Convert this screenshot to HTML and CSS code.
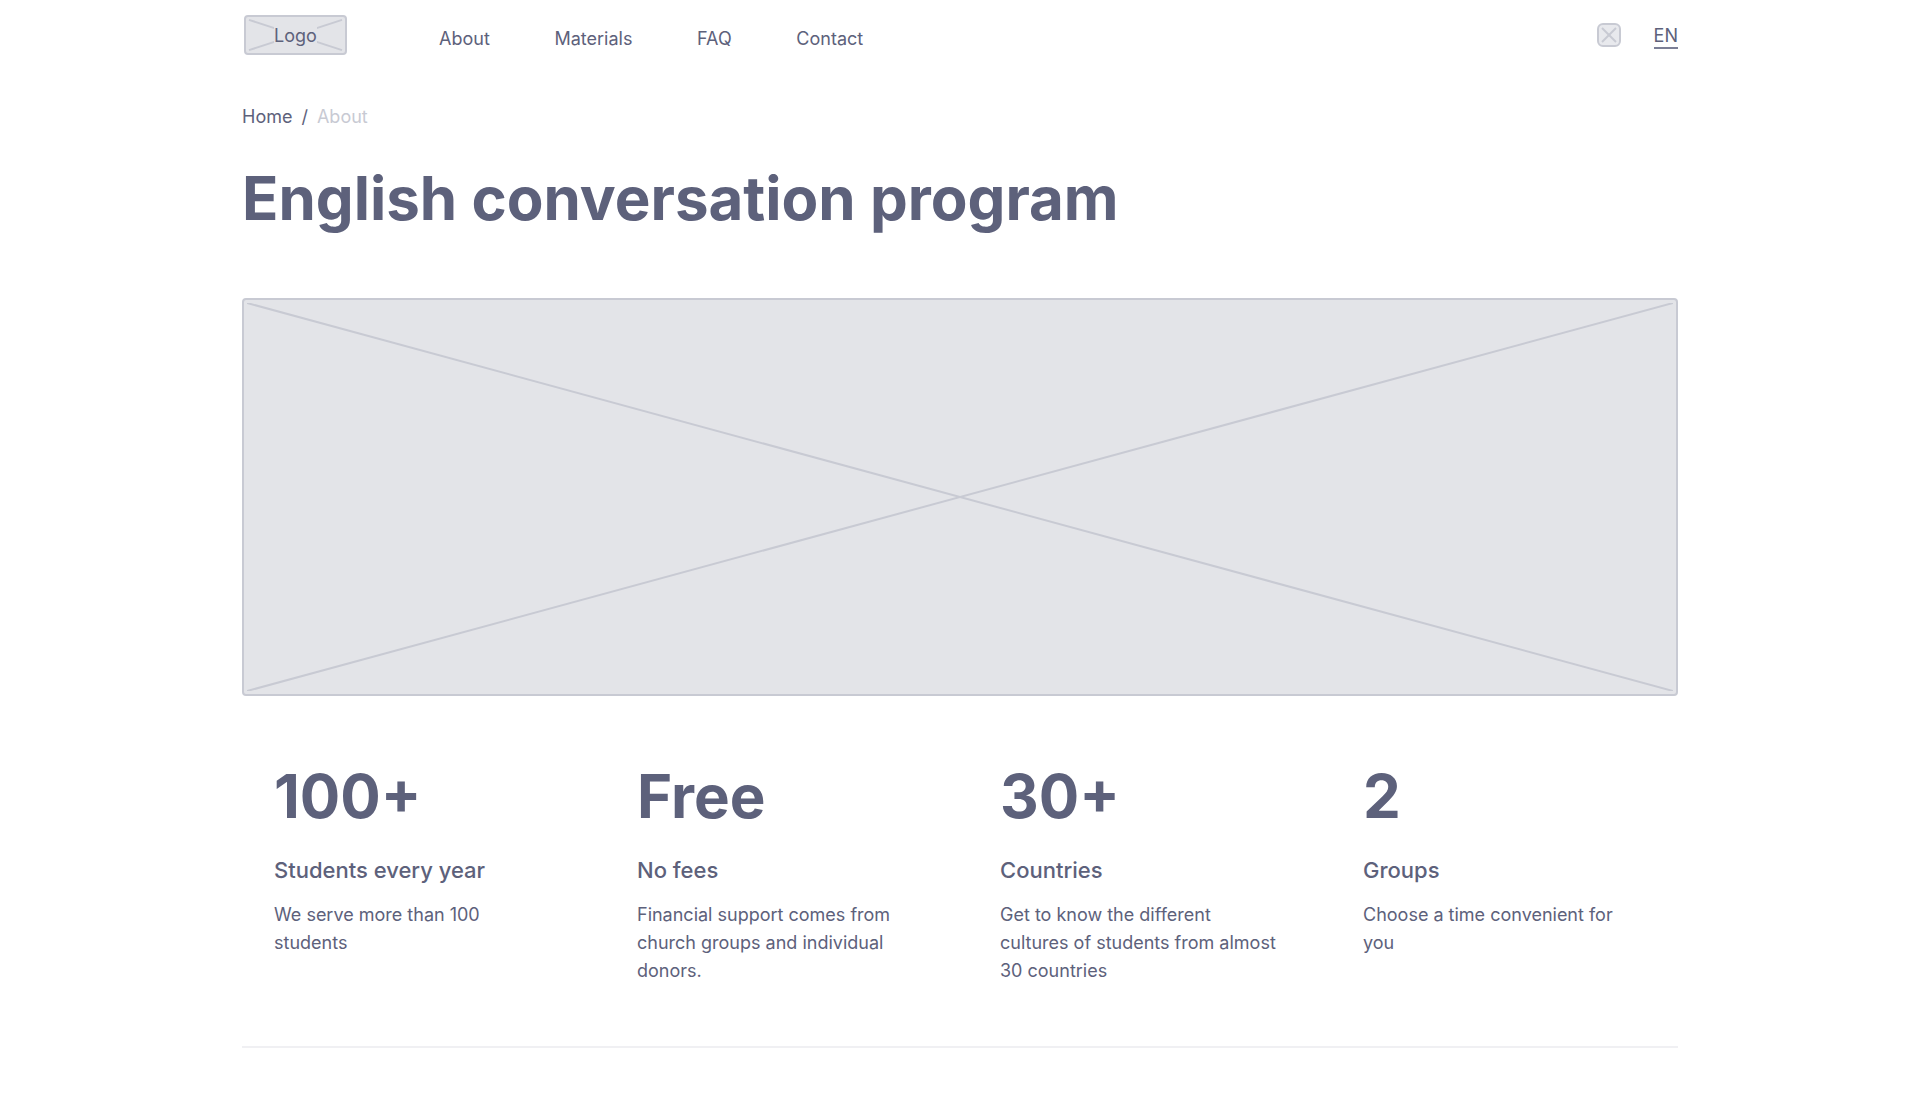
FILE: index.html
```html
<!DOCTYPE html>
<html lang="en">
<head>
  <meta charset="UTF-8" />
  <meta name="viewport" content="width=device-width, initial-scale=1" />
  <title>English conversation program</title>
  <link rel="stylesheet" href="styles.css">
</head>
<body>
  <div class="container">
    <header class="topbar">
      <a class="logo" href="#">
        <svg class="cross" viewBox="0 0 100 100" preserveAspectRatio="none">
          <line x1="3" y1="8" x2="97" y2="92" vector-effect="non-scaling-stroke" />
          <line x1="97" y1="8" x2="3" y2="92" vector-effect="non-scaling-stroke" />
        </svg>
        <span class="logo-text">Logo</span>
      </a>
      <nav class="nav">
        <a href="#">About</a>
        <a href="#">Materials</a>
        <a href="#">FAQ</a>
        <a href="#">Contact</a>
      </nav>
      <div class="topbar-right">
        <span class="icon-box">
          <svg class="cross" viewBox="0 0 20 20">
            <line x1="3" y1="3" x2="17" y2="17" />
            <line x1="17" y1="3" x2="3" y2="17" />
          </svg>
        </span>
        <a class="lang" href="#">EN</a>
      </div>
    </header>

    <div class="breadcrumb">
      <a href="#">Home</a>
      <span>/</span>
      <span class="current">About</span>
    </div>

    <h1 class="title">English conversation program</h1>

    <div class="hero">
      <svg class="cross" viewBox="0 0 100 100" preserveAspectRatio="none">
        <line x1="0" y1="0" x2="100" y2="100" vector-effect="non-scaling-stroke" />
        <line x1="100" y1="0" x2="0" y2="100" vector-effect="non-scaling-stroke" />
      </svg>
    </div>

    <section class="stats">
      <div class="stat">
        <div class="stat-value">100+</div>
        <h3 class="stat-label">Students every year</h3>
        <p class="stat-text">We serve more than 100 students</p>
      </div>
      <div class="stat">
        <div class="stat-value">Free</div>
        <h3 class="stat-label">No fees</h3>
        <p class="stat-text">Financial support comes from church groups and individual donors.</p>
      </div>
      <div class="stat">
        <div class="stat-value">30+</div>
        <h3 class="stat-label">Countries</h3>
        <p class="stat-text">Get to know the different cultures of students from almost 30 countries</p>
      </div>
      <div class="stat">
        <div class="stat-value">2</div>
        <h3 class="stat-label">Groups</h3>
        <p class="stat-text">Choose a time convenient for you</p>
      </div>
    </section>

    <hr class="divider" />
  </div>
</body>
</html>
```

FILE: styles.css
```css
html, body {
  margin: 0;
  padding: 0;
  background: #fff;
  color: #5d617b;
  font-family: Inter, "Liberation Sans", sans-serif;
}
a {
  color: inherit;
  text-decoration: none;
}
.container {
  width: 1436px;
  margin: 0 auto;
}
.cross {
  display: block;
  width: 100%;
  height: 100%;
}
.cross line {
  stroke: #c8cad3;
  stroke-width: 2;
}
.topbar {
  display: flex;
  align-items: flex-start;
  height: 90px;
  padding-top: 15px;
  box-sizing: border-box;
}
.logo {
  width: 103px;
  height: 40px;
  margin-left: 2px;
  box-sizing: border-box;
  background: #e3e4e8;
  border: 2px solid #c8cad3;
  border-radius: 4px;
  display: block;
  position: relative;
  font-size: 18px;
  line-height: 38px;
  text-align: center;
}
.logo .cross {
  position: absolute;
  top: 0;
  left: 0;
}
.logo-text {
  position: relative;
  background: #e3e4e8;
}
.nav {
  display: flex;
  gap: 64.7px;
  margin-left: 92px;
  font-size: 18px;
  line-height: 28px;
  padding-top: 10px;
}
.topbar-right {
  display: flex;
  align-items: flex-start;
  gap: 33px;
  margin-left: auto;
  padding-top: 8px;
}
.icon-box {
  display: block;
  width: 24px;
  height: 24px;
  box-sizing: border-box;
  background: #e8e9ed;
  border: 2px solid #c8cad3;
  border-radius: 6px;
}
.lang {
  font-size: 18px;
  line-height: 22px;
  margin-top: 2px;
  border-bottom: 2px solid #7b7f96;
}
.breadcrumb {
  display: flex;
  gap: 9px;
  font-size: 18px;
  line-height: 28px;
  margin-top: 13px;
}
.breadcrumb .current {
  color: #c8cad3;
}
.title {
  margin: 31px 0 0;
  font-size: 60px;
  line-height: 72px;
  font-weight: 700;
}
.hero {
  height: 398px;
  box-sizing: border-box;
  margin-top: 64px;
  padding: 3px;
  background: #e3e4e8;
  border: 2px solid #c8cad3;
  border-radius: 4px;
}
.stats {
  display: grid;
  grid-template-columns: repeat(4, 1fr);
  gap: 16px;
  margin-top: 64px;
  height: 286px;
}
.stat {
  padding: 0 32px;
}
.stat-value {
  font-size: 60px;
  line-height: 72px;
  font-weight: 700;
}
.stat-label {
  margin: 22px 0 0;
  font-size: 22px;
  line-height: 32px;
  font-weight: 500;
}
.stat-text {
  margin: 15px 0 0;
  font-size: 18px;
  line-height: 28px;
}
.divider {
  margin: 0;
  border: 0;
  border-top: 2px solid #f0f0f3;
}
```
